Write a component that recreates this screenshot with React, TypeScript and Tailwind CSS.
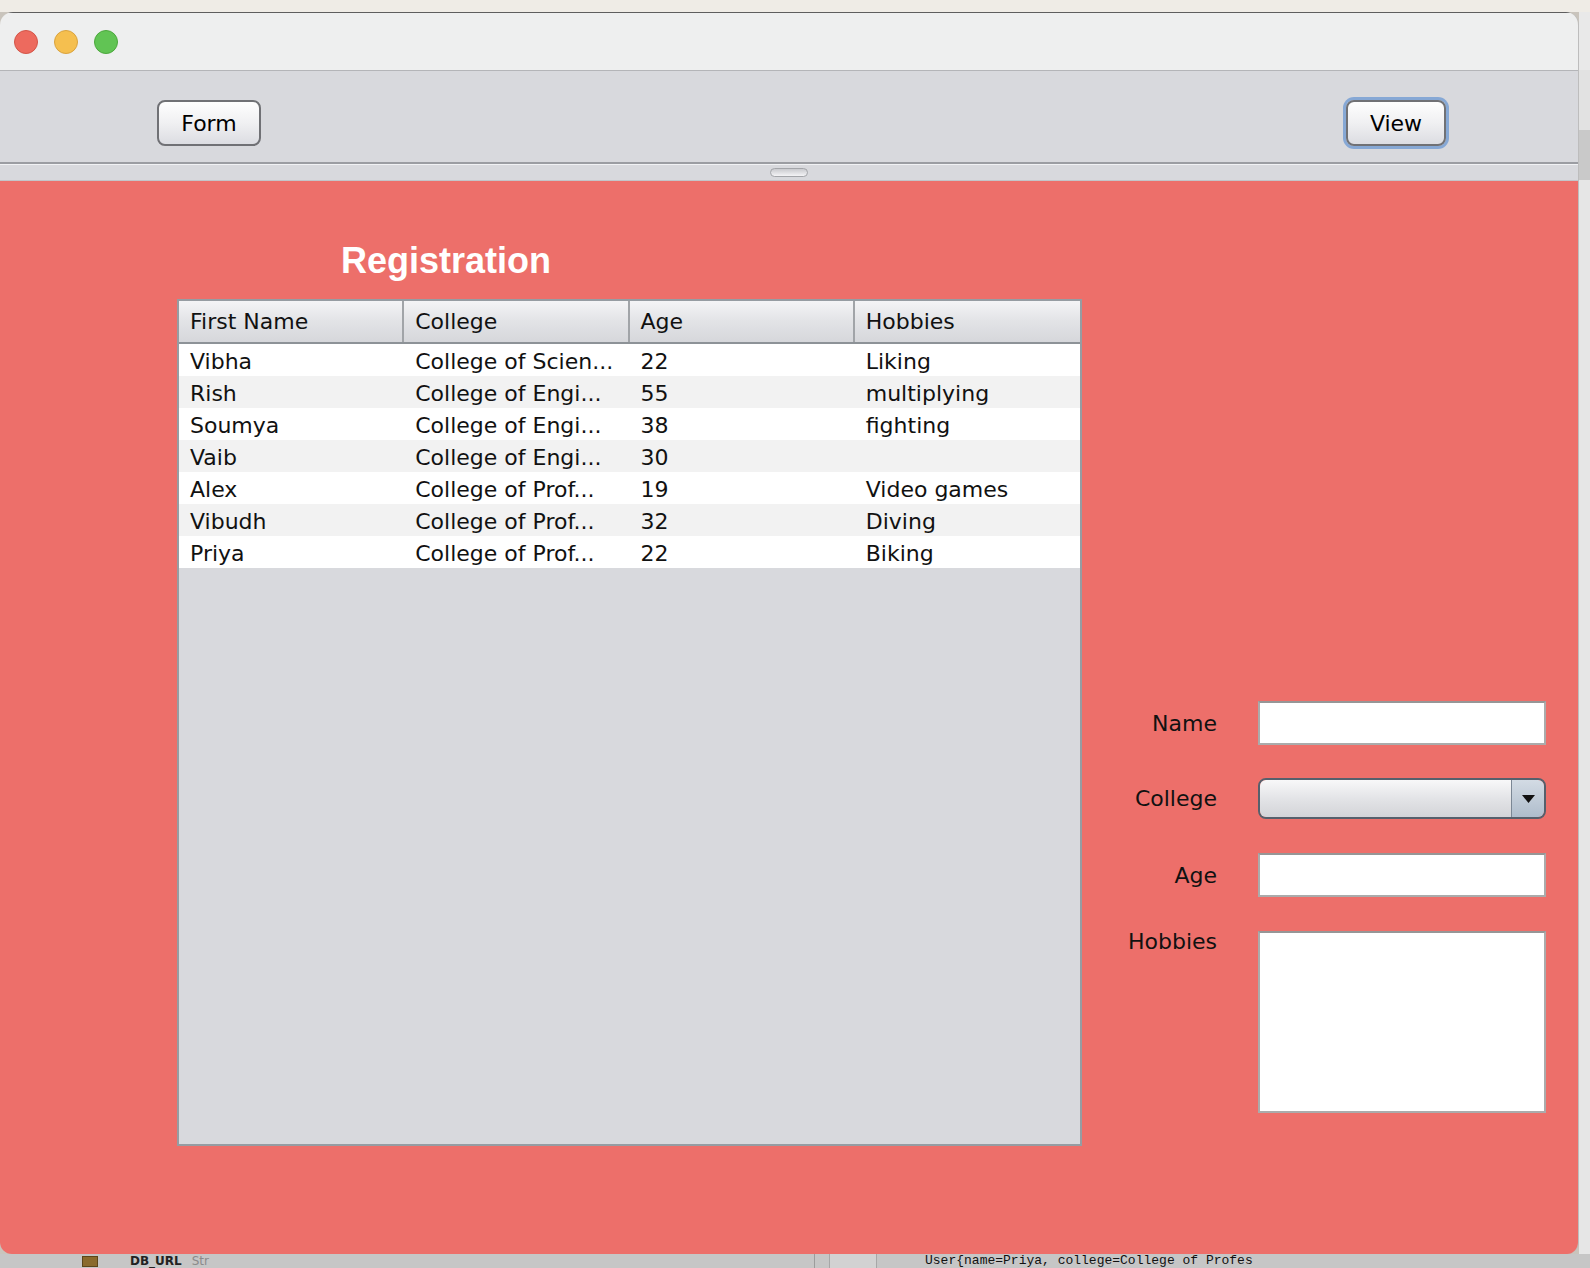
import React from "react"

const rows = [
  ["Vibha", "College of Scien...", "22", "Liking"],
  ["Rish", "College of Engi...", "55", "multiplying"],
  ["Soumya", "College of Engi...", "38", "fighting"],
  ["Vaib", "College of Engi...", "30", ""],
  ["Alex", "College of Prof...", "19", "Video games"],
  ["Vibudh", "College of Prof...", "32", "Diving"],
  ["Priya", "College of Prof...", "22", "Biking"],
]

const columns = ["First Name", "College", "Age", "Hobbies"]

function AquaButton({ label, width, focused }: { label: string; width: string; focused?: boolean }) {
  return (
    <div
      className={`${width} h-[46px] rounded-[8px] border-2 border-[#707175] bg-linear-to-b from-[#fefefe] via-[#f0f0f2] to-[#dcdde2] flex items-center justify-center text-[22px] text-black ${
        focused ? "ring-3 ring-[#86a8d5]" : ""
      }`}
    >
      {label}
    </div>
  )
}

function TextField({ h }: { h: string }) {
  return <div className={`w-[288px] ${h} bg-white border-2 border-[#ababab] border-t-[#969696]`} />
}

export default function App() {
  return (
    <div className="w-[1590px] h-[1268px] overflow-hidden flex flex-col bg-[#cfcfcf] font-['DejaVu_Sans',sans-serif]">
      {/* desktop strip above the window */}
      <div className="h-[12px] bg-[#efece6]" />

      <div className="flex h-[1242px] bg-[#c9c4bc]">
        {/* window */}
        <div className="w-[1579px] h-full flex flex-col rounded-t-[13px] rounded-b-[12px] overflow-hidden border-r border-[#bdbdbd]">
          {/* title bar */}
          <div className="h-[59px] bg-[#eeefef] border-t border-[#5e5e5e] border-b border-b-[#b4b5b8] flex items-center pl-[14px] gap-[16px]">
            <div className="w-[24px] h-[24px] rounded-full bg-[#ed6a5e] border border-[#d35548]" />
            <div className="w-[24px] h-[24px] rounded-full bg-[#f5bf4f] border border-[#d9a33f]" />
            <div className="w-[24px] h-[24px] rounded-full bg-[#61c454] border border-[#4ca83d]" />
          </div>

          {/* toolbar */}
          <div className="h-[93px] bg-[#d8d9dd] border-b-2 border-[#9b9da2] flex justify-between items-start pt-[29px] pl-[157px] pr-[132px]">
            <AquaButton label="Form" width="w-[104px]" />
            <AquaButton label="View" width="w-[100px]" focused />
          </div>

          {/* split pane divider */}
          <div className="h-[17px] bg-[#d8d9dd] border-t border-[#f1f2f4] border-b border-b-[#c3c5c9] flex items-center justify-center">
            <div className="w-[38px] h-[9px] rounded-full border border-[#a3a5a9] bg-linear-to-b from-[#c9cace] to-[#f4f4f6]" />
          </div>

          {/* content */}
          <div className="flex-1 bg-[#ed6f6a] flex items-start pl-[177px] pt-[62px]">
            <div className="w-[905px] flex flex-col">
              <div className="h-[36px] leading-none pl-[164px] text-[36px] font-bold text-white font-['Liberation_Sans',Arial,sans-serif]">
                Registration
              </div>

              <div className="mt-[20px] h-[847px] border-2 border-[#969ca2] bg-[#d8d9dd] flex flex-col text-[22px] text-[#111]">
                <div className="grid grid-cols-4 h-[43px] border-b-2 border-[#8d9297] bg-linear-to-b from-[#f4f4f6] via-[#e2e3e6] to-[#d6d7db]">
                  {columns.map((c, i) => (
                    <div
                      key={c}
                      className={`leading-[41px] pl-[11px] ${i < 3 ? "border-r-2 border-[#a1a4a8]" : ""}`}
                    >
                      {c}
                    </div>
                  ))}
                </div>
                {rows.map((r, i) => (
                  <div key={i} className={`grid grid-cols-4 h-[32px] ${i % 2 === 0 ? "bg-white" : "bg-[#f2f2f2]"}`}>
                    {r.map((cell, j) => (
                      <div key={j} className="leading-[35px] pl-[11px] whitespace-nowrap overflow-hidden">
                        {cell}
                      </div>
                    ))}
                  </div>
                ))}
              </div>
            </div>

            {/* form */}
            <div className="ml-[28px] mt-[458px] flex flex-col text-[22px] text-[#111]">
              <div className="flex items-center gap-[41px]">
                <div className="w-[107px] text-right">Name</div>
                <TextField h="h-[44px]" />
              </div>
              <div className="flex items-center gap-[41px] mt-[33px]">
                <div className="w-[107px] text-right">College</div>
                <div className="w-[288px] h-[41px] rounded-[8px] border-2 border-[#56606c] flex overflow-hidden">
                  <div className="flex-1 bg-linear-to-b from-[#f8f8f9] via-[#e3e4e7] to-[#d3d4d8]" />
                  <div className="w-[33px] border-l border-[#7b8795] bg-linear-to-b from-[#d3dbe4] to-[#afbdcc] flex items-center justify-center">
                    <svg width="13" height="8" viewBox="0 0 13 8">
                      <polygon points="0,0 13,0 6.5,8" fill="#111" />
                    </svg>
                  </div>
                </div>
              </div>
              <div className="flex items-center gap-[41px] mt-[34px]">
                <div className="w-[107px] text-right">Age</div>
                <TextField h="h-[44px]" />
              </div>
              <div className="flex items-start gap-[41px] mt-[34px]">
                <div className="w-[107px] text-right leading-[26px] -mt-[2px]">Hobbies</div>
                <TextField h="h-[182px]" />
              </div>
            </div>
          </div>
        </div>

        {/* sliver of the IDE behind */}
        <div className="flex-1 bg-[#dedede] flex flex-col">
          <div className="h-[58px] bg-[#e9e9e9]" />
          <div className="h-[60px] bg-[#e2e2e2]" />
          <div className="h-[50px] bg-[#c9c9c9]" />
          <div className="flex-1 bg-[#e6e6e6]" />
        </div>
      </div>

      {/* IDE strip below the window */}
      <div className="h-[14px] bg-[#c6c6c6] flex items-center overflow-hidden">
        <div className="ml-[82px] w-[16px] h-[11px] bg-[#8a6a2c] border border-[#5d4619]" />
        <div className="ml-[32px] leading-[14px] text-[12px] font-bold text-[#222]">DB_URL</div>
        <div className="ml-[10px] leading-[14px] text-[12px] text-[#8a8a8a]">Str</div>
        <div className="ml-[605px] w-px h-full bg-[#9c9c9c]" />
        <div className="ml-[14px] w-[48px] h-full bg-[#d2d2d2] border-x border-[#a7a7a7]" />
        <div className="ml-[48px] leading-[14px] text-[13px] text-[#111] whitespace-nowrap font-['Liberation_Mono',monospace]">
          User{"{"}name=Priya, college=College of Profes
        </div>
      </div>
    </div>
  )
}
